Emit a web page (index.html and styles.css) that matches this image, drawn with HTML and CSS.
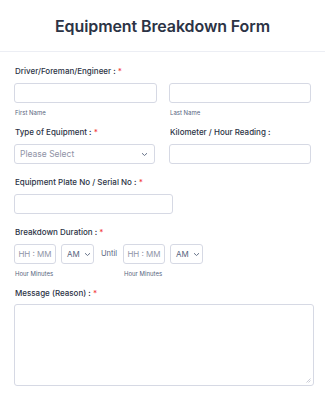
FILE: index.html
```html
<!DOCTYPE html>
<html lang="en">
<head>
  <meta charset="UTF-8">
  <title>Equipment Breakdown Form</title>
  <link rel="stylesheet" href="styles.css">
</head>
<body>
<header class="topo">
  <h1>Equipment Breakdown Form</h1>
</header>

<form class="form">
  <div class="field has-sub">
    <label class="label">Driver/Foreman/Engineer : <span class="req">*</span></label>
    <div class="row-name">
      <div>
        <input class="input" type="text">
        <div class="sub">First Name</div>
      </div>
      <div>
        <input class="input" type="text">
        <div class="sub">Last Name</div>
      </div>
    </div>
  </div>

  <div class="row-two">
    <div class="field">
      <label class="label">Type of Equipment : <span class="req">*</span></label>
      <div class="select">
        <span>Please Select</span>
        <svg width="7" height="5" viewBox="0 0 7 5"><path d="M1 1.2l2.5 2.3L6 1.2" fill="none" stroke="#57647e" stroke-width="0.9"/></svg>
      </div>
    </div>
    <div class="field">
      <label class="label">Kilometer / Hour Reading :</label>
      <input class="input" type="text">
    </div>
  </div>

  <div class="field">
    <label class="label">Equipment Plate No / Serial No : <span class="req">*</span></label>
    <input class="input plate" type="text">
  </div>

  <div class="field has-sub">
    <label class="label">Breakdown Duration : <span class="req">*</span></label>
    <div class="row-time">
      <div>
        <div class="time-pair">
          <div class="hhmm">HH : MM</div>
          <div class="ampm">AM <svg width="7" height="5" viewBox="0 0 7 5"><path d="M1 1.2l2.5 2.3L6 1.2" fill="none" stroke="#57647e" stroke-width="0.9"/></svg></div>
        </div>
        <div class="sub">Hour Minutes</div>
      </div>
      <span class="until">Until</span>
      <div>
        <div class="time-pair">
          <div class="hhmm">HH : MM</div>
          <div class="ampm">AM <svg width="7" height="5" viewBox="0 0 7 5"><path d="M1 1.2l2.5 2.3L6 1.2" fill="none" stroke="#57647e" stroke-width="0.9"/></svg></div>
        </div>
        <div class="sub">Hour Minutes</div>
      </div>
    </div>
  </div>

  <div class="field">
    <label class="label msg">Message (Reason) : <span class="req">*</span></label>
    <div class="area">
      <svg class="grip" width="5" height="5" viewBox="0 0 5 5"><path d="M4.5 0.5L0.5 4.5M4.5 2.5L2.5 4.5" stroke="#b4b8c6" stroke-width="0.7"/></svg>
    </div>
  </div>
</form>
</body>
</html>
```

FILE: styles.css
```css
body { font-family: Inter, 'Noto Sans', sans-serif; background: #fff; margin: 0; padding: 0; color: #2c3345; }
.topo { height: 51px; border-bottom: 1px solid #eceef4; display: flex; align-items: center; justify-content: center; }
h1 { margin: 0; font-size: 16px; font-weight: 600; color: #2c3345; letter-spacing: -0.1px; }
.form { padding: 13px 11px 0 14px; }
.field { margin-bottom: 12px; }
.field.has-sub { margin-bottom: 8px; }
.label { display: block; font-size: 8px; line-height: 12px; font-weight: 500; margin-bottom: 6px; padding-left: 1px; }
.req { color: #f23a3c; }
.input { display: block; box-sizing: border-box; width: 100%; height: 20px; margin: 0; border: 1px solid #d6d9e4; border-radius: 3px; background: #fff; }
.sub { font-size: 6px; line-height: 10px; color: #57647e; margin-top: 5px; padding-left: 1px; }
.row-name { display: grid; grid-template-columns: 143px 142px; gap: 12px; }
.row-two { display: grid; grid-template-columns: 141px 142px; gap: 14px; }
.select { box-sizing: border-box; height: 20px; border: 1px solid #d6d9e4; border-radius: 3px; display: flex; align-items: center; justify-content: space-between; padding: 0 6px 0 5px; font-size: 8.5px; color: #8f93a6; }
.plate { width: 159px; }
.row-time { display: flex; align-items: flex-start; }
.time-pair { display: flex; gap: 5px; }
.hhmm, .ampm { box-sizing: border-box; height: 20px; border: 1px solid #d6d9e4; border-radius: 3px; display: flex; align-items: center; font-size: 8px; color: #8f93a6; }
.hhmm { width: 42px; justify-content: center; }
.ampm { width: 33px; padding-left: 5px; gap: 4px; color: #57647e; }
.until { font-size: 7.5px; color: #57647e; margin: 5px 0 0 7px; width: 22px; }
.msg { margin-top: 8px; margin-bottom: 5px; }
.area { position: relative; box-sizing: border-box; width: 300px; height: 82px; border: 1px solid #d6d9e4; border-radius: 3px; }
.grip { position: absolute; right: 2px; bottom: 2px; }
```
